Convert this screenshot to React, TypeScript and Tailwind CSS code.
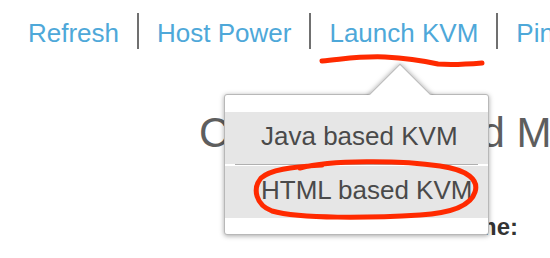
import React from "react";

const navItems = ["Refresh", "Host Power", "Launch KVM", "Ping", "Reboot"];

export default function App() {
  return (
    <div
      className="relative w-[550px] h-[258px] overflow-hidden bg-white"
      style={{ fontFamily: '"Liberation Sans", Arial, Helvetica, sans-serif' }}
    >
      {/* top nav */}
      <nav className="pt-[13px] pl-[10px] flex whitespace-nowrap">
        {navItems.map((label, i) => (
          <div
            key={label}
            className={
              i === 0
                ? "h-[36px] pl-[18px] pr-[18px] text-[26px] leading-[40px] text-[#4ea8d9]"
                : "h-[36px] pl-[18px] pr-[18px] text-[26px] leading-[40px] text-[#4ea8d9] border-l-2 border-[#707070]"
            }
          >
            {label}
          </div>
        ))}
      </nav>

      {/* main content */}
      <main className="flex flex-col">
        <h1 className="mt-[60px] pl-[199px] whitespace-nowrap text-[42px] leading-[48px] font-normal text-[#5e5e5e]">
          Cisco Integrated Management Controller
        </h1>
        <div className="mt-[56px] flex">
          <div className="w-[518px] text-right whitespace-nowrap text-[24px] leading-[28px] font-bold text-[#333333]">
            Hostname:
          </div>
        </div>
      </main>

      {/* dropdown menu */}
      <div className="absolute left-[224px] top-[94px] w-[265px] h-[141px] bg-white border border-[#b8b8b8] rounded-[3px] shadow-[0_1px_5px_rgba(0,0,0,0.35)] pt-[17px] flex flex-col">
        <div className="h-[52px] bg-[#e6e6e6] pl-[36px] pt-[10px] text-[26px] leading-[29px] text-[#4a4a4a] whitespace-nowrap">
          Java based KVM
        </div>
        <div className="h-[2px] bg-white px-[10px]">
          <div className="h-px bg-[#b0b0b0]" />
        </div>
        <div className="h-[52px] bg-[#e6e6e6] pl-[36px] pt-[10px] text-[26px] leading-[29px] text-[#4a4a4a] whitespace-nowrap">
          HTML based KVM
        </div>
      </div>

      {/* arrow */}
      <div className="absolute left-[355px] top-[54px] w-[90px] h-[41px] overflow-hidden">
        <div className="absolute left-[22px] top-[18.5px] w-[46px] h-[46px] rotate-45 bg-white border border-[#b8b8b8] shadow-[0_0_5px_rgba(0,0,0,0.35)]" />
      </div>

      {/* red annotations */}
      <svg
        className="absolute left-0 top-0 pointer-events-none"
        width="550"
        height="258"
        viewBox="0 0 550 258"
      >
        <path
          d="M322 61 C 345 59, 360 56, 385 57 C 405 58, 420 60, 438 64 C 450 65, 470 64, 482 63"
          fill="none"
          stroke="#ff2a00"
          strokeWidth="5"
          strokeLinecap="round"
          strokeLinejoin="round"
        />
        <path
          d="M300 168 C 330 160, 400 160, 440 166 C 468 170, 479 180, 475 192 C 471 205, 452 213, 420 215 C 370 218, 300 219, 272 211 C 256 205, 252 189, 261 178 C 270 170, 290 167, 322 165"
          fill="none"
          stroke="#ff2a00"
          strokeWidth="5"
          strokeLinecap="round"
          strokeLinejoin="round"
        />
      </svg>
    </div>
  );
}
